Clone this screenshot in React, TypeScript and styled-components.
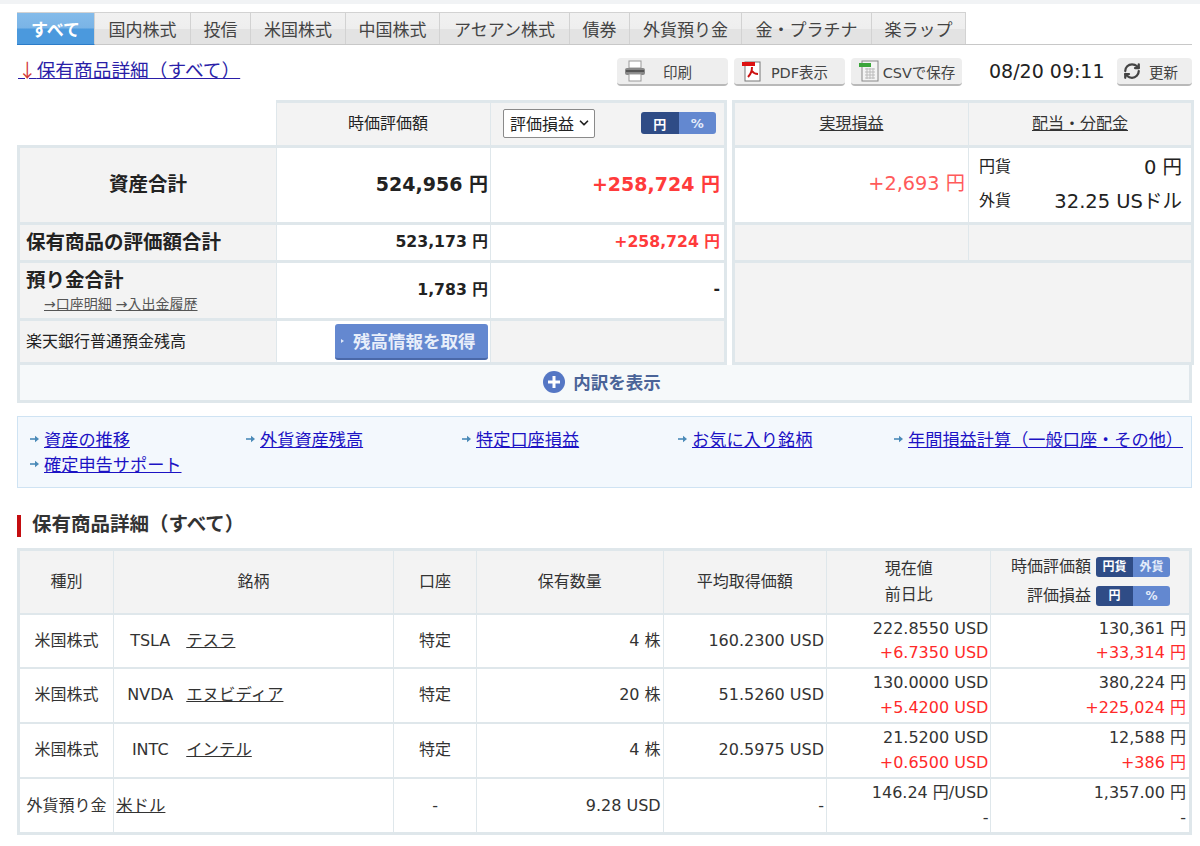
import React from 'react';
import styled, { createGlobalStyle } from 'styled-components';
import { RefreshCw, ChevronDown } from 'lucide-react';

const LINE = '#dfe7eb';
const RED = '#ff3b3b';
const FONT = '"DejaVu Sans", "Noto Sans CJK JP", sans-serif';

const GlobalStyle = createGlobalStyle`
  html, body {
    margin: 0;
    background: #ffffff;
    color: #222222;
    font-family: ${FONT};
    font-size: 16px;
  }
  * {
    box-sizing: border-box;
  }
`;

const TopStrip = styled.div`
  height: 4px;
  background: #f1f3f5;
`;

const Page = styled.div`
  width: 1200px;
  padding: 8px 8px 0 17px;
`;

const TabBar = styled.nav`
  display: flex;
  height: 33px;
  border-bottom: 1px solid #c8c8c8;
`;

const Tab = styled.a<{ $active?: boolean; $width: number }>`
  display: flex;
  align-items: center;
  justify-content: center;
  width: ${(p) => p.$width}px;
  font-size: 17px;
  color: ${(p) => (p.$active ? '#ffffff' : '#444444')};
  font-weight: ${(p) => (p.$active ? 700 : 400)};
  border: solid #d2d2d2;
  border-width: 1px 1px 0 0;
  background: ${(p) =>
    p.$active
      ? 'linear-gradient(#84bbea 0%, #7ab4e6 48%, #4b99dd 52%, #4b99dd 100%)'
      : 'linear-gradient(#f1f1f1 0%, #eeeeee 50%, #e3e3e3 52%, #e3e3e3 100%)'};
  ${(p) => p.$active && 'border-bottom: 1px solid #2c7cc8; margin-bottom: -1px;'}
`;

const Toolbar = styled.div`
  display: flex;
  align-items: flex-start;
  height: 55px;
  padding-top: 13px;
`;

const JumpLink = styled.a`
  display: block;
  margin-right: auto;
  padding-left: 1px;
  font-size: 18.7px;
  line-height: 22px;
  color: #2a1ea8;
  text-decoration: underline;
`;

const JumpArrow = styled.span`
  color: #d23a3a;
  font-family: "Noto Sans CJK JP", sans-serif;
`;

const ToolButton = styled.button<{ $width: number }>`
  display: flex;
  align-items: center;
  width: ${(p) => p.$width}px;
  height: 28px;
  margin-left: 6px;
  padding: 0 0 0 6px;
  border: 0;
  border-bottom: 2px solid #b9b9b9;
  border-radius: 4px;
  background: #eeeeee;
  color: #444444;
  font-family: ${FONT};
  font-size: 14.5px;
`;

const ToolLabel = styled.span<{ $shift: number }>`
  flex: 1;
  padding-right: ${(p) => p.$shift}px;
  text-align: center;
  white-space: nowrap;
`;

const Clock = styled.div`
  width: 149px;
  padding-left: 27px;
  font-size: 19px;
  line-height: 26px;
  color: #222222;
  white-space: nowrap;
`;

const Summary = styled.div`
  display: flex;
  gap: 5px;
`;

const SummaryTable = styled.table<{ $width: number }>`
  width: ${(p) => p.$width}px;
  table-layout: fixed;
  border-collapse: collapse;
  color: #222222;
  td, th {
    padding: 0;
    font-weight: 400;
  }
`;

const Blank = styled.td`
  border: 0;
`;

const HeadCell = styled.th<{ $indent?: number }>`
  background: #f3f3f3;
  border: 3px solid ${LINE};
  border-bottom-width: 2px;
  border-left-width: 1px;
  border-right-width: 1px;
  border-top-width: 3px;
  padding-left: ${(p) => p.$indent ?? 0}px !important;
  font-size: 16px;
  text-align: center;
  &:first-child { border-left-width: 3px; }
  &:last-child { border-right-width: 3px; }
`;

const HeadRow = styled.div`
  display: flex;
  align-items: center;
  justify-content: space-between;
  margin-top: 2px;
  padding: 0 8px 0 12px;
`;

const SelectBox = styled.button`
  display: flex;
  align-items: center;
  gap: 3px;
  width: 92px;
  height: 29px;
  padding: 0 0 0 6px;
  border: 1px solid #8a8a8a;
  border-radius: 2px;
  background: #ffffff;
  color: #222222;
  font-family: ${FONT};
  font-size: 16px;
`;

const Toggle = styled.div<{ $small?: boolean }>`
  display: flex;
  width: ${(p) => (p.$small ? 74 : 75)}px;
  height: ${(p) => (p.$small ? 20 : 22)}px;
  border-radius: 3px;
  overflow: hidden;
`;

const ToggleSide = styled.span<{ $on?: boolean; $small?: boolean }>`
  flex: 1;
  display: flex;
  align-items: center;
  justify-content: center;
  background: ${(p) => (p.$on ? '#2f4c86' : '#6388d0')};
  color: ${(p) => (p.$on ? '#ffffff' : '#e4ecfa')};
  font-size: ${(p) => (p.$small ? 12 : 13)}px;
  font-weight: 700;
`;

const LinkText = styled.a`
  color: #333333;
  text-decoration: underline;
`;

const LabelCell = styled.td<{ $large?: boolean; $plain?: boolean }>`
  background: #f3f3f3;
  border: 3px solid ${LINE};
  border-right-width: 1px;
  padding-left: ${(p) => (p.$large ? 0 : 6)}px !important;
  text-align: ${(p) => (p.$large ? 'center' : 'left')};
  font-size: ${(p) => (p.$plain ? 16 : 19.5)}px;
  font-weight: ${(p) => (p.$plain ? 400 : 700)} !important;
`;

const SubLinks = styled.div`
  display: flex;
  gap: 4px;
  padding: 1px 0 0 18px;
  font-size: 14px;
  font-weight: 400;
  line-height: 20px;
  a {
    color: #555555;
  }
`;

const ValueCell = styled.td<{ $size?: number; $red?: boolean; $gray?: boolean; $pad?: number }>`
  background: ${(p) => (p.$gray ? '#f3f3f3' : '#ffffff')};
  border: 3px solid ${LINE};
  border-left-width: 1px;
  border-right-width: 1px;
  padding-right: ${(p) => p.$pad ?? 2}px !important;
  text-align: right;
  color: ${(p) => (p.$red ? RED : '#222222')};
  font-size: ${(p) => p.$size ?? 15.7}px;
  font-weight: 700 !important;
  &:last-child { border-right-width: 3px; }
`;

const FetchCell = styled(ValueCell)`
  && {
    padding-bottom: 0 !important;
  }
`;

// Noto sits low in its line box, $lift brings the cell text back up
const Row = styled.tr<{ $height: number; $lift?: number }>`
  height: ${(p) => p.$height}px;
  & > td,
  & > th {
    padding-bottom: ${(p) => p.$lift ?? 0}px !important;
  }
`;

const FetchButton = styled.button`
  display: inline-flex;
  align-items: center;
  width: 153px;
  height: 36px;
  padding: 0 0 0 6px;
  border: 0;
  border-bottom: 2px solid #4a68a8;
  border-radius: 3px;
  background: #6488d0;
  color: #e8eefa;
  font-family: ${FONT};
  font-size: 17.5px;
  font-weight: 700;
  vertical-align: middle;
  white-space: nowrap;
  &::before {
    content: '';
    margin-right: 9px;
    border-left: 3px solid #dfe7f7;
    border-top: 2.5px solid transparent;
    border-bottom: 2.5px solid transparent;
  }
`;

const RightLeft = styled.td`
  background: #ffffff;
  border: 3px solid ${LINE};
  border-right-width: 1px;
  padding-right: 3px !important;
  text-align: right;
  color: #ff5a5a;
  font-size: 19.3px;
`;

const RightDetail = styled.td`
  background: #ffffff;
  border: 3px solid ${LINE};
  border-left-width: 1px;
  padding-left: 10px !important;
  padding-right: 9px !important;
`;

const Currency = styled.div`
  display: flex;
  justify-content: space-between;
  align-items: center;
  height: 34px;
  font-size: 16px;
`;

const CurrencyValue = styled.span`
  font-size: 19.5px;
`;

const GrayCell = styled.td<{ $left?: boolean; $right?: boolean }>`
  background: #f3f3f3;
  border: 3px solid ${LINE};
  border-left-width: ${(p) => (p.$left ? 3 : 1)}px;
  border-right-width: ${(p) => (p.$right ? 3 : 1)}px;
`;

const ExpandBar = styled.div`
  display: flex;
  align-items: center;
  justify-content: center;
  gap: 8px;
  height: 38px;
  padding: 0 5px 2px 0;
  background: #f6f9fa;
  border: 3px solid ${LINE};
  border-top: 0;
  color: #4a6498;
  font-size: 17.5px;
  font-weight: 700;
`;

const LinkBox = styled.div`
  display: grid;
  grid-template-columns: repeat(5, 216px);
  grid-auto-rows: 25px;
  margin-top: 13px;
  height: 72px;
  padding: 9px 0 0 12px;
  background: #f3f8fd;
  border: 1px solid #cfe3f3;
`;

const QuickLink = styled.a`
  display: flex;
  align-items: center;
  gap: 4px;
  color: #1c12c4;
  font-size: 17.2px;
  white-space: nowrap;
  svg {
    flex-shrink: 0;
  }
`;

const QuickLabel = styled.span`
  text-decoration: underline;
`;

const SectionTitle = styled.h2`
  margin: 27px 0 11px;
  height: 22px;
  padding-left: 11px;
  border-left: 4px solid #c40d10;
  color: #333333;
  font-size: 19.5px;
  line-height: 20px;
  font-weight: 700;
`;

const DetailTable = styled.table`
  width: 1175px;
  table-layout: fixed;
  border-collapse: collapse;
  border: 3px solid ${LINE};
  color: #333333;
`;

const DetailHead = styled.th`
  padding: 0;
  height: 64px;
  background: #f3f3f3;
  border: 1px solid ${LINE};
  border-bottom-width: 2px;
  font-size: 16px;
  font-weight: 400;
  line-height: 26px;
`;

const HeadLine = styled.div`
  display: flex;
  align-items: center;
  justify-content: flex-end;
  gap: 5px;
  padding-right: 19px;
  height: 29px;
`;

const DetailCell = styled.td<{ $align?: 'left' | 'center' | 'right' }>`
  padding: 1px 2px 0;
  border: 1px solid ${LINE};
  border-bottom-width: 2px;
  font-size: 16px;
  line-height: 24.5px;
  text-align: ${(p) => p.$align ?? 'center'};
  &:last-child {
    padding-right: 3px;
  }
`;

const Ticker = styled.span`
  display: inline-block;
  width: 68px;
  margin-right: 2px;
  text-align: center;
`;

const NameLink = styled(LinkText)`
  font-size: 16.4px;
`;

const Gain = styled.div<{ $up?: boolean }>`
  color: ${(p) => (p.$up ? '#ff2a2a' : '#333333')};
`;

function PrintIcon() {
  return (
    <svg width="24" height="24" viewBox="0 0 24 24">
      <rect x="6" y="2" width="12" height="7" fill="#fff" stroke="#999" />
      <rect x="2" y="9" width="20" height="7" rx="2" fill="#888" />
      <rect x="3" y="11" width="18" height="2" fill="#555" />
      <rect x="6" y="15" width="12" height="7" fill="#fff" stroke="#999" />
    </svg>
  );
}

function PdfIcon() {
  return (
    <svg width="24" height="24" viewBox="0 0 24 24">
      <rect x="5" y="3" width="15" height="19" fill="#fff" stroke="#777" />
      <rect x="2" y="3" width="13" height="4" fill="#dd1111" />
      <path d="M8 18c3-3 4-6 4-10M12 12c2 3 4 3 6 3" fill="none" stroke="#cc1111" strokeWidth="2" />
    </svg>
  );
}

function CsvIcon() {
  return (
    <svg width="24" height="24" viewBox="0 0 24 24">
      <rect x="5" y="2" width="16" height="20" fill="#f4f4f4" stroke="#888" />
      <path d="M8 10h10M8 13h10M8 16h10M8 19h10M10 9v11M13 9v11M16 9v11" stroke="#bbb" strokeWidth="1" />
      <rect x="2" y="4" width="12" height="4" fill="#3aa53a" />
    </svg>
  );
}

function PlusCircle() {
  return (
    <svg width="22" height="22" viewBox="0 0 22 22">
      <circle cx="11" cy="11" r="11" fill="#5577c4" />
      <path d="M11 5v12M5 11h12" stroke="#fff" strokeWidth="3" />
    </svg>
  );
}

function SmallArrow() {
  return (
    <svg width="10" height="8" viewBox="0 0 10 8">
      <path d="M0 4h7" stroke="#4a8ab8" strokeWidth="1.6" />
      <path d="M5 0.8 9 4 5 7.2z" fill="#4a8ab8" />
    </svg>
  );
}

const tabs = [
  { label: 'すべて', width: 78, active: true },
  { label: '国内株式', width: 96 },
  { label: '投信', width: 60 },
  { label: '米国株式', width: 95 },
  { label: '中国株式', width: 94 },
  { label: 'アセアン株式', width: 130 },
  { label: '債券', width: 60 },
  { label: '外貨預り金', width: 112 },
  { label: '金・プラチナ', width: 130 },
  { label: '楽ラップ', width: 94 },
];

const quickLinks = [
  '資産の推移',
  '外貨資産残高',
  '特定口座損益',
  'お気に入り銘柄',
  '年間損益計算（一般口座・その他）',
  '確定申告サポート',
];

const holdings = [
  { kind: '米国株式', ticker: 'TSLA', name: 'テスラ', qty: '4 株', avg: '160.2300 USD', now: '222.8550 USD', diff: '+6.7350 USD', value: '130,361 円', gain: '+33,314 円', height: 54 },
  { kind: '米国株式', ticker: 'NVDA', name: 'エヌビディア', qty: '20 株', avg: '51.5260 USD', now: '130.0000 USD', diff: '+5.4200 USD', value: '380,224 円', gain: '+225,024 円', height: 55 },
  { kind: '米国株式', ticker: 'INTC', name: 'インテル', qty: '4 株', avg: '20.5975 USD', now: '21.5200 USD', diff: '+0.6500 USD', value: '12,588 円', gain: '+386 円', height: 55 },
];

export default function App() {
  return (
    <>
      <GlobalStyle />
      <TopStrip />
      <Page>
        <TabBar>
          {tabs.map((t) => (
            <Tab key={t.label} $active={t.active} $width={t.width}>
              {t.label}
            </Tab>
          ))}
        </TabBar>

        <Toolbar>
          <JumpLink>
            <JumpArrow>↓</JumpArrow>保有商品詳細（すべて）
          </JumpLink>
          <ToolButton $width={111}>
            <PrintIcon />
            <ToolLabel $shift={20}>印刷</ToolLabel>
          </ToolButton>
          <ToolButton $width={111}>
            <PdfIcon />
            <ToolLabel $shift={10}>PDF表示</ToolLabel>
          </ToolButton>
          <ToolButton $width={111}>
            <CsvIcon />
            <ToolLabel $shift={5}>CSVで保存</ToolLabel>
          </ToolButton>
          <Clock>08/20 09:11</Clock>
          <ToolButton $width={75}>
            <RefreshCw size={18} strokeWidth={3} color="#444" />
            <ToolLabel $shift={6}>更新</ToolLabel>
          </ToolButton>
        </Toolbar>

        <Summary>
          <SummaryTable $width={707}>
            <colgroup>
              <col width={258} />
              <col width={214} />
              <col width={235} />
            </colgroup>
            <tbody>
              <Row $height={45} $lift={4}>
                <Blank />
                <HeadCell $indent={9}>時価評価額</HeadCell>
                <HeadCell>
                  <HeadRow>
                    <SelectBox>
                      評価損益
                      <ChevronDown size={14} strokeWidth={3} />
                    </SelectBox>
                    <Toggle>
                      <ToggleSide $on>円</ToggleSide>
                      <ToggleSide>%</ToggleSide>
                    </Toggle>
                  </HeadRow>
                </HeadCell>
              </Row>
              <Row $height={77} $lift={6}>
                <LabelCell $large>資産合計</LabelCell>
                <ValueCell $size={19}>524,956 円</ValueCell>
                <ValueCell $size={19} $red $pad={4}>+258,724 円</ValueCell>
              </Row>
              <Row $height={38} $lift={4}>
                <LabelCell>保有商品の評価額合計</LabelCell>
                <ValueCell>523,173 円</ValueCell>
                <ValueCell $red $pad={4}>+258,724 円</ValueCell>
              </Row>
              <Row $height={58} $lift={4}>
                <LabelCell>
                  預り金合計
                  <SubLinks>
                    <LinkText>→口座明細</LinkText>
                    <LinkText>→入出金履歴</LinkText>
                  </SubLinks>
                </LabelCell>
                <ValueCell>1,783 円</ValueCell>
                <ValueCell $pad={4}>-</ValueCell>
              </Row>
              <Row $height={44} $lift={4}>
                <LabelCell $plain>楽天銀行普通預金残高</LabelCell>
                <FetchCell>
                  <FetchButton>残高情報を取得</FetchButton>
                </FetchCell>
                <ValueCell $gray />
              </Row>
            </tbody>
          </SummaryTable>

          <SummaryTable $width={459}>
            <colgroup>
              <col width={235} />
              <col width={224} />
            </colgroup>
            <tbody>
              <Row $height={45} $lift={4}>
                <HeadCell>
                  <LinkText>実現損益</LinkText>
                </HeadCell>
                <HeadCell>
                  <LinkText>配当・分配金</LinkText>
                </HeadCell>
              </Row>
              <Row $height={77} $lift={6}>
                <RightLeft>+2,693 円</RightLeft>
                <RightDetail>
                  <Currency>
                    円貨<CurrencyValue>0 円</CurrencyValue>
                  </Currency>
                  <Currency>
                    外貨<CurrencyValue>32.25 USドル</CurrencyValue>
                  </Currency>
                </RightDetail>
              </Row>
              <Row $height={38}>
                <GrayCell $left />
                <GrayCell $right />
              </Row>
              <Row $height={102}>
                <GrayCell $left $right colSpan={2} />
              </Row>
            </tbody>
          </SummaryTable>
        </Summary>

        <ExpandBar>
          <PlusCircle />
          内訳を表示
        </ExpandBar>

        <LinkBox>
          {quickLinks.map((l) => (
            <QuickLink key={l}>
              <SmallArrow />
              <QuickLabel>{l}</QuickLabel>
            </QuickLink>
          ))}
        </LinkBox>

        <SectionTitle>保有商品詳細（すべて）</SectionTitle>

        <DetailTable>
          <colgroup>
            <col width={95} />
            <col width={279} />
            <col width={83} />
            <col width={186} />
            <col width={163} />
            <col width={164} />
            <col width={199} />
          </colgroup>
          <thead>
            <tr>
              <DetailHead>種別</DetailHead>
              <DetailHead>銘柄</DetailHead>
              <DetailHead>口座</DetailHead>
              <DetailHead>保有数量</DetailHead>
              <DetailHead>平均取得価額</DetailHead>
              <DetailHead>
                現在値
                <br />
                前日比
              </DetailHead>
              <DetailHead>
                <HeadLine>
                  時価評価額
                  <Toggle $small>
                    <ToggleSide $on $small>円貨</ToggleSide>
                    <ToggleSide $small>外貨</ToggleSide>
                  </Toggle>
                </HeadLine>
                <HeadLine>
                  評価損益
                  <Toggle $small>
                    <ToggleSide $on $small>円</ToggleSide>
                    <ToggleSide $small>%</ToggleSide>
                  </Toggle>
                </HeadLine>
              </DetailHead>
            </tr>
          </thead>
          <tbody>
            {holdings.map((h) => (
              <Row key={h.ticker} $height={h.height}>
                <DetailCell>{h.kind}</DetailCell>
                <DetailCell $align="left">
                  <Ticker>{h.ticker}</Ticker>
                  <NameLink>{h.name}</NameLink>
                </DetailCell>
                <DetailCell>特定</DetailCell>
                <DetailCell $align="right">{h.qty}</DetailCell>
                <DetailCell $align="right">{h.avg}</DetailCell>
                <DetailCell $align="right">
                  {h.now}
                  <Gain $up>{h.diff}</Gain>
                </DetailCell>
                <DetailCell $align="right">
                  {h.value}
                  <Gain $up>{h.gain}</Gain>
                </DetailCell>
              </Row>
            ))}
            <Row $height={56}>
              <DetailCell>外貨預り金</DetailCell>
              <DetailCell $align="left">
                <NameLink>米ドル</NameLink>
              </DetailCell>
              <DetailCell>-</DetailCell>
              <DetailCell $align="right">9.28 USD</DetailCell>
              <DetailCell $align="right">-</DetailCell>
              <DetailCell $align="right">
                146.24 円/USD
                <Gain>-</Gain>
              </DetailCell>
              <DetailCell $align="right">
                1,357.00 円
                <Gain>-</Gain>
              </DetailCell>
            </Row>
          </tbody>
        </DetailTable>
      </Page>
    </>
  );
}
